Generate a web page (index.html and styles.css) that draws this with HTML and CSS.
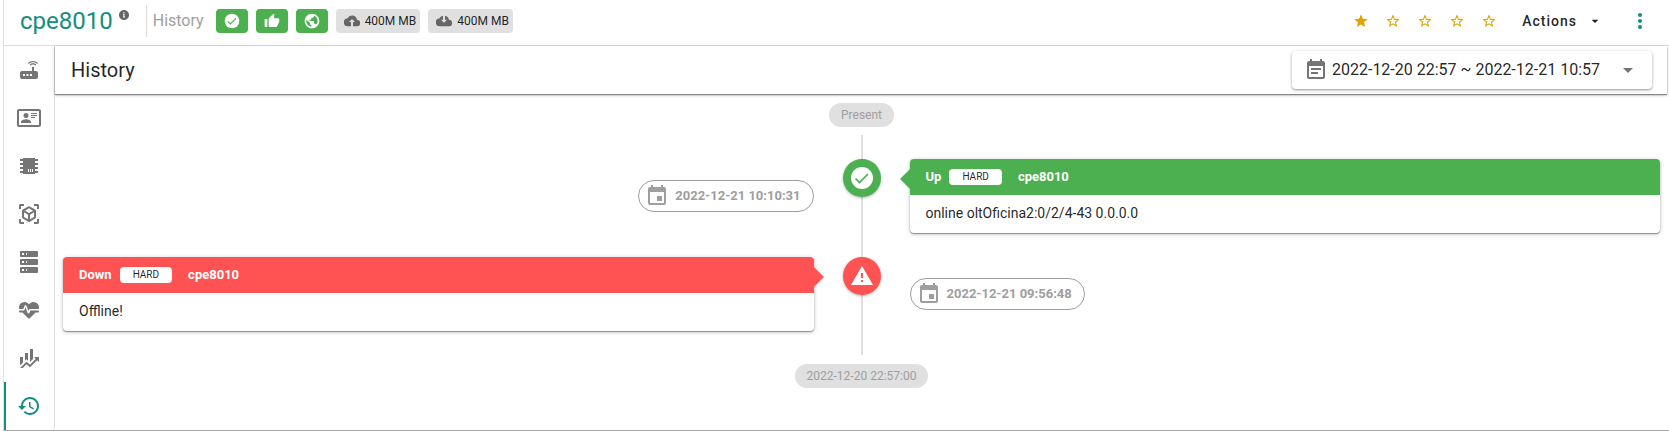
FILE: index.html
```
<!DOCTYPE html>
<html lang="en">
<head>
<meta charset="utf-8">
<title>cpe8010 - History</title>
<link rel="stylesheet" href="styles.css">
</head>
<body>
<svg class="defs" aria-hidden="true">
  <symbol id="i-check" viewBox="0 0 24 24"><circle cx="12" cy="12" r="11" fill="currentColor"/><path d="M5.5 12.5l4 4L18 8" fill="none" stroke="#4caf50" stroke-width="1.7"/></symbol>
  <symbol id="i-star" viewBox="0 0 24 24"><path d="M12 17.27L18.18 21l-1.64-7.03L22 9.24l-7.19-.61L12 2 9.19 8.63 2 9.24l5.46 4.73L5.82 21z"/></symbol>
  <symbol id="i-star-o" viewBox="0 0 24 24"><path d="M22 9.24l-7.19-.62L12 2 9.19 8.63 2 9.24l5.46 4.73L5.82 21 12 17.27 18.18 21l-1.63-7.03L22 9.24zM12 15.4l-3.76 2.27 1-4.28-3.32-2.88 4.38-.38L12 6.1l1.71 4.04 4.38.38-3.32 2.88 1 4.28L12 15.4z"/></symbol>
  <symbol id="i-down" viewBox="0 0 24 24"><path d="M7 10l5 5 5-5z"/></symbol>
  <symbol id="i-event" viewBox="0 0 24 24"><path d="M17 12h-5v5h5v-5zM16 1v2H8V1H6v2H5c-1.11 0-1.99.9-1.99 2L3 19c0 1.1.89 2 2 2h14c1.1 0 2-.9 2-2V5c0-1.1-.9-2-2-2h-1V1h-2zm3 18H5V8h14v11z"/></symbol>
</svg>
<div class="frame">
  <header class="topbar">
    <h1 class="device">cpe8010</h1>
    <svg class="info" viewBox="0 0 24 24"><path d="M12 2C6.48 2 2 6.48 2 12s4.48 10 10 10 10-4.48 10-10S17.52 2 12 2zm2 15h-4v-2h1v-3h-1v-2h3v5h1zm-1-8h-2V6h2z"/></svg>
    <div class="crumb">History</div>
    <div class="badges">
      <span class="badge ok"><svg viewBox="0 0 24 24"><use href="#i-check"/></svg></span>
      <span class="badge ok"><svg viewBox="0 0 24 24"><path d="M1 21h4V9H1v12zm22-11c0-1.1-.9-2-2-2h-6.31l.95-4.57.03-.32c0-.41-.17-.79-.44-1.06L14.17 1 7.59 7.59C7.22 7.95 7 8.45 7 9v10c0 1.1.9 2 2 2h9c.83 0 1.54-.5 1.84-1.22l3.02-7.05c.09-.23.14-.47.14-.73v-2z"/></svg></span>
      <span class="badge ok"><svg viewBox="0 0 24 24"><path d="M12 1C5.9 1 1 5.900 1 12s4.900 11 11 11 11-4.900 11-11S18.100 1 12 1zm-1 19.500c-4.200-.5-7.500-4.100-7.500-8.500 0-.6.1-1.200.2-1.800L9 15v1c0 1.100.9 2 2 2zm6.900-3.100c-.3-.8-1-1.400-1.900-1.400h-1v-3c0-.5-.4-1-1-1H8v-2h2c.6 0 1-.4 1-1V7h2c1.100 0 2-.9 2-2v-.8c3.200 1.200 5.500 4.200 5.500 7.800 0 2.100-.8 4-2.600 5.400z"/></svg></span>
      <span class="badge"><svg viewBox="0 0 24 24"><path d="M10.500 20H6a6 6 0 0 1-.7-12A7.500 7.500 0 0 1 19.400 10 5 5 0 0 1 19 20h-5.500v-6.500h3L12 9l-4.500 4.500h3z"/></svg>400M MB</span>
      <span class="badge"><svg viewBox="0 0 24 24"><path d="M10.500 4.200V10h-3l4.500 4.500 4.500-4.500h-3V4.200A7.500 7.500 0 0 1 19.400 10 5 5 0 0 1 19 20H6A6 6 0 0 1 5.300 8a7.500 7.500 0 0 1 5.200-3.800z"/></svg>400M MB</span>
    </div>
    <div class="rating">
      <button aria-label="1 star"><svg viewBox="0 0 24 24"><use href="#i-star"/></svg></button>
      <button aria-label="2 stars"><svg viewBox="0 0 24 24"><use href="#i-star-o"/></svg></button>
      <button aria-label="3 stars"><svg viewBox="0 0 24 24"><use href="#i-star-o"/></svg></button>
      <button aria-label="4 stars"><svg viewBox="0 0 24 24"><use href="#i-star-o"/></svg></button>
      <button aria-label="5 stars"><svg viewBox="0 0 24 24"><use href="#i-star-o"/></svg></button>
    </div>
    <button class="actions">Actions<svg viewBox="0 0 24 24"><use href="#i-down"/></svg></button>
    <button class="more" aria-label="More"><svg viewBox="0 0 24 24"><circle cx="12" cy="6" r="2"/><circle cx="12" cy="12" r="2"/><circle cx="12" cy="18" r="2"/></svg></button>
  </header>
  <div class="columns">
    <nav class="rail">
      <a href="#device" aria-label="Device"><svg viewBox="0 0 24 24"><path d="M20.200 5.900l.8-.8C19.600 3.700 17.800 3 16 3s-3.600.7-5 2.100l.8.8C13 4.800 14.500 4.200 16 4.200s3 .6 4.200 1.700zm-.9.8c-.9-.9-2.100-1.400-3.300-1.400s-2.400.5-3.300 1.400l.8.8c.7-.7 1.600-1 2.500-1 .9 0 1.800.3 2.500 1l.8-.8zM19 13h-2V9h-2v4H5c-1.100 0-2 .9-2 2v4c0 1.100.9 2 2 2h14c1.100 0 2-.9 2-2v-4c0-1.100-.9-2-2-2zM8 18H6v-2h2v2zm3.500 0h-2v-2h2v2zm3.500 0h-2v-2h2v2z"/></svg></a>
      <a href="#contact" aria-label="Contact"><svg viewBox="0 0 24 24"><path d="M22,3H2C0.91,3.040 0.040,3.910 0,5V19C0.040,20.090 0.910,20.960 2,21H22C23.090,20.960 23.960,20.090 24,19V5C23.960,3.910 23.090,3.040 22,3M22,19H2V5H22V19M14,17V15.750C14,14.090 10.660,13.250 9,13.250C7.340,13.250 4,14.090 4,15.750V17H14M9,7A2.500,2.500 0 0,0 6.500,9.500A2.500,2.500 0 0,0 9,12A2.500,2.500 0 0,0 11.500,9.500A2.500,2.500 0 0,0 9,7M14,7V8H20V7H14M14,9V10H20V9H14M14,11V12H18V11H14"/></svg></a>
      <a href="#hardware" aria-label="Hardware"><svg viewBox="0 0 24 24"><path d="M6,4H18V5H21V7H18V9H21V11H18V13H21V15H18V17H21V19H18V20H6V19H3V17H6V15H3V13H6V11H3V9H6V7H3V5H6V4M11,15V18H12V15H11M13,15V18H14V15H13M15,15V18H16V15H15Z"/></svg></a>
      <a href="#model" aria-label="Model"><svg viewBox="0 0 24 24"><path d="M17,22V20H20V17H22V20.5C22,20.89 21.84,21.24 21.54,21.54C21.24,21.84 20.89,22 20.5,22H17M7,22H3.5C3.11,22 2.76,21.84 2.46,21.54C2.16,21.24 2,20.89 2,20.5V17H4V20H7V22M17,2H20.5C20.89,2 21.24,2.16 21.54,2.46C21.84,2.76 22,3.11 22,3.5V7H20V4H17V2M7,2V4H4V7H2V3.5C2,3.11 2.16,2.76 2.46,2.46C2.76,2.16 3.11,2 3.5,2H7M13,17.25L17,14.95V10.36L13,12.66V17.25M12,10.92L16,8.63L12,6.28L8,8.63L12,10.92M7,14.95L11,17.25V12.66L7,10.36V14.95M18.23,7.59C18.73,7.91 19,8.34 19,8.91V15.23C19,15.8 18.73,16.23 18.23,16.55L12.75,19.73C12.25,20.05 11.75,20.05 11.25,19.73L5.77,16.55C5.27,16.23 5,15.8 5,15.23V8.91C5,8.34 5.27,7.91 5.77,7.59L11.25,4.41C11.5,4.28 11.75,4.22 12,4.22C12.25,4.22 12.5,4.28 12.75,4.41L18.23,7.59Z"/></svg></a>
      <a href="#servers" aria-label="Servers"><svg viewBox="0 0 24 24"><path d="M4,1H20A1,1 0 0,1 21,2V6A1,1 0 0,1 20,7H4A1,1 0 0,1 3,6V2A1,1 0 0,1 4,1M4,9H20A1,1 0 0,1 21,10V14A1,1 0 0,1 20,15H4A1,1 0 0,1 3,14V10A1,1 0 0,1 4,9M4,17H20A1,1 0 0,1 21,18V22A1,1 0 0,1 20,23H4A1,1 0 0,1 3,22V18A1,1 0 0,1 4,17M9,5H10V3H9V5M9,13H10V11H9V13M9,21H10V19H9V21M5,3V5H7V3H5M5,11V13H7V11H5M5,19V21H7V19H5Z"/></svg></a>
      <a href="#health" aria-label="Health"><svg viewBox="0 0 24 24"><path d="M7.5,4A5.5,5.5 0 0,0 2,9.5C2,10 2.09,10.5 2.22,11H6.3L7.57,7.63C7.87,6.83 9.05,6.75 9.43,7.63L11.5,13L12.09,11.58C12.22,11.25 12.57,11 13,11H21.78C21.91,10.5 22,10 22,9.5A5.5,5.5 0 0,0 16.5,4C14.64,4 13,4.93 12,6.34C11,4.93 9.36,4 7.5,4V4M3,12.5A1,1 0 0,0 2,13.5A1,1 0 0,0 3,14.5H5.44L11,20C12,20.9 12,20.9 13,20L18.56,14.5H21A1,1 0 0,0 22,13.5A1,1 0 0,0 21,12.5H13.4L12.47,14.8C12.07,15.81 10.92,15.67 10.55,14.83L8.5,9.5L7.54,11.83C7.39,12.21 7.05,12.5 6.6,12.5H3Z"/></svg></a>
      <a href="#metrics" aria-label="Metrics"><svg viewBox="0 0 24 24"><path d="M6,16.5L3,19.44V11H6M11,14.66L9.43,13.32L8,14.64V7H11M16,13L13,16V3H16M18.81,12.81L17,11H22V16L20.21,14.21L13,21.36L9.53,18.34L5.75,22H3L9.47,15.66L13,18.64"/></svg></a>
      <a class="active" href="#history" aria-label="History" aria-current="page"><svg viewBox="0 0 24 24"><path d="M13 3c-4.97 0-9 4.03-9 9H1l3.89 3.89.07.14L9 12H6c0-3.87 3.13-7 7-7s7 3.13 7 7-3.13 7-7 7c-1.93 0-3.68-.79-4.94-2.06l-1.42 1.42C8.27 19.99 10.51 21 13 21c4.97 0 9-4.03 9-9s-4.03-9-9-9zm-1 5v5l4.28 2.54.72-1.21-3.5-2.08V8H12z"/></svg></a>
    </nav>
    <main class="content">
      <div class="toolbar">
        <h2>History</h2>
        <button class="range">
          <svg viewBox="0 0 24 24"><path d="M17 10H7v2h10v-2zm2-7h-1V1h-2v2H8V1H6v2H5c-1.110 0-1.990.9-1.990 2L3 19c0 1.100.89 2 2 2h14c1.100 0 2-.9 2-2V5c0-1.100-.9-2-2-2zm0 16H5V8h14v11zm-5-5H7v2h7v-2z"/></svg>
          <span>2022-12-20 22:57 ~ 2022-12-21 10:57</span>
          <svg class="caret" viewBox="0 0 24 24"><use href="#i-down"/></svg>
        </button>
      </div>
      <div class="history">
        <span class="pill">Present</span>
        <div class="timeline">
          <div class="row">
            <div class="side before"><time class="stamp"><svg viewBox="0 0 24 24"><use href="#i-event"/></svg>2022-12-21 10:10:31</time></div>
            <div class="dot up"><svg viewBox="0 0 24 24"><use href="#i-check"/></svg></div>
            <article class="card up">
              <header><b>Up</b><span class="kind">HARD</span><b>cpe8010</b></header>
              <p>online oltOficina2:0/2/4-43 0.0.0.0</p>
            </article>
          </div>
          <div class="row">
            <article class="card down">
              <header><b>Down</b><span class="kind">HARD</span><b>cpe8010</b></header>
              <p>Offline!</p>
            </article>
            <div class="dot down"><svg viewBox="0 0 24 24"><path d="M1 21h22L12 2 1 21zm12-3h-2v-2h2v2zm0-4h-2V9h2v5z"/></svg></div>
            <div class="side"><time class="stamp"><svg viewBox="0 0 24 24"><use href="#i-event"/></svg>2022-12-21 09:56:48</time></div>
          </div>
        </div>
        <span class="pill">2022-12-20 22:57:00</span>
      </div>
    </main>
  </div>
</div>
</body>
</html>
```
FILE: styles.css
```
* { box-sizing: border-box; }
body {
  margin: 0;
  background: #fff;
  color: rgba(0, 0, 0, .87);
  font: 14px/20px Roboto, "Liberation Sans", sans-serif;
}
h1, h2, p { margin: 0; font-weight: 400; }
button { border: 0; padding: 0; background: none; color: inherit; font: inherit; cursor: pointer; }
svg { display: block; flex: none; width: 24px; height: 24px; fill: currentColor; }
.defs { position: absolute; width: 0; height: 0; }

.frame {
  display: flex;
  flex-direction: column;
  min-height: 100vh;
  margin-left: 3px;
  border-left: 1px solid #e0e0e0;
  border-bottom: 1px solid #a6a6a6;
}

.topbar {
  display: flex;
  align-items: center;
  height: 46px;
  padding: 0 17px 4px 16px;
  border-bottom: 1px solid #dedede;
}
.device { color: #148f7e; font-size: 24px; line-height: 32px; }
.info { width: 12px; height: 12px; margin: 0 16px 12px 5px; color: #666; }
.crumb {
  padding: 0 12px 0 6px;
  border-left: 1px solid #dedede;
  color: #9e9e9e;
  font-size: 16px;
  line-height: 32px;
}
.badges { display: flex; gap: 8px; }
.badge {
  display: flex;
  align-items: center;
  gap: 5px;
  height: 24px;
  padding: 0 4px 0 8px;
  border-radius: 4px;
  background: #e0e0e0;
  font-size: 12px;
}
.badge svg { width: 16px; height: 16px; color: #666; }
.badge.ok { padding: 0 8px; background: #4caf50; }
.badge.ok svg { color: #fff; }
.rating { display: flex; gap: 16px; margin-left: auto; color: #e0a500; }
.rating svg { width: 16px; height: 16px; }
.actions {
  display: flex;
  align-items: center;
  gap: 10px;
  margin-left: 25px;
  font-weight: 500;
  letter-spacing: 1px;
}
.actions svg { width: 16px; height: 16px; }
.more { margin-left: 25px; color: #148f7e; }

.columns { display: flex; flex: 1; }
.rail { flex: none; width: 51px; border-right: 1px solid #dedede; border-radius: 0 0 4px 0; }
.rail a {
  display: flex;
  align-items: center;
  justify-content: center;
  height: 48px;
  color: #757575;
}
.rail .active { border-left: 2px solid #148f7e; padding-right: 2px; color: #148f7e; }

.content { flex: 1; min-width: 0; }
.toolbar {
  display: flex;
  align-items: center;
  justify-content: space-between;
  height: 48px;
  margin-right: 2px;
  padding: 0 15px 0 16px;
  box-shadow: 0 1px 1px rgba(0, 0, 0, .35), 0 1px 3px rgba(0, 0, 0, .3);
}
.toolbar h2 { font-size: 20px; line-height: 24px; }
.range {
  display: flex;
  align-items: center;
  height: 38px;
  padding: 0 12px;
  border-radius: 4px;
  box-shadow: 0 1px 2px rgba(0, 0, 0, .3), 0 1px 4px rgba(0, 0, 0, .16);
  font-size: 16px;
}
.range svg { color: #757575; }
.range span { margin: 0 16px 0 4px; }

.history { display: flex; flex-direction: column; align-items: center; padding: 9px 9px 0 8px; }
.pill {
  padding: 0 12px;
  border-radius: 12px;
  background: #e0e0e0;
  color: #9e9e9e;
  font-size: 12px;
  line-height: 24px;
}
.timeline {
  display: grid;
  gap: 24px;
  width: 100%;
  margin: 8px 0 9px;
  padding: 24px 0;
  background: linear-gradient(#e0e0e0, #e0e0e0) center / 2px 100% no-repeat;
}
.row { display: grid; grid-template-columns: 1fr 96px 1fr; }
.side { display: flex; align-items: center; }
.before { justify-content: flex-end; }
.stamp {
  display: flex;
  align-items: center;
  gap: 6px;
  height: 32px;
  padding: 0 12px 0 6px;
  border: 1px solid #9e9e9e;
  border-radius: 16px;
  color: #9e9e9e;
  font-size: 13px;
  font-weight: 700;
}
.dot {
  display: flex;
  align-items: center;
  justify-content: center;
  justify-self: center;
  width: 38px;
  height: 38px;
  border-radius: 50%;
  box-shadow: 0 1px 3px rgba(0, 0, 0, .3);
  color: #fff;
}
.card {
  position: relative;
  border-radius: 4px;
  box-shadow: 0 1px 1px rgba(0, 0, 0, .35), 0 1px 4px rgba(0, 0, 0, .25);
}
.card::before {
  content: "";
  position: absolute;
  top: 10px;
  border: 10px solid transparent;
}
.card.up::before { right: 100%; border-left-width: 0; border-right-color: #4caf50; }
.card.down::before { left: 100%; border-right-width: 0; border-left-color: #ff5252; }
.card header {
  display: flex;
  align-items: center;
  height: 36px;
  padding: 0 16px;
  border-radius: 4px 4px 0 0;
  color: #fff;
  font-size: 13px;
}
.up header, .dot.up { background: #4caf50; }
.down header, .dot.down { background: #ff5252; }
.kind {
  margin: 0 16px 0 8px;
  padding: 0 13px;
  border-radius: 4px;
  background: #fff;
  color: rgba(0, 0, 0, .87);
  font-size: 10px;
  line-height: 16px;
}
.card p { padding: 8px 16px 10px; }
```
